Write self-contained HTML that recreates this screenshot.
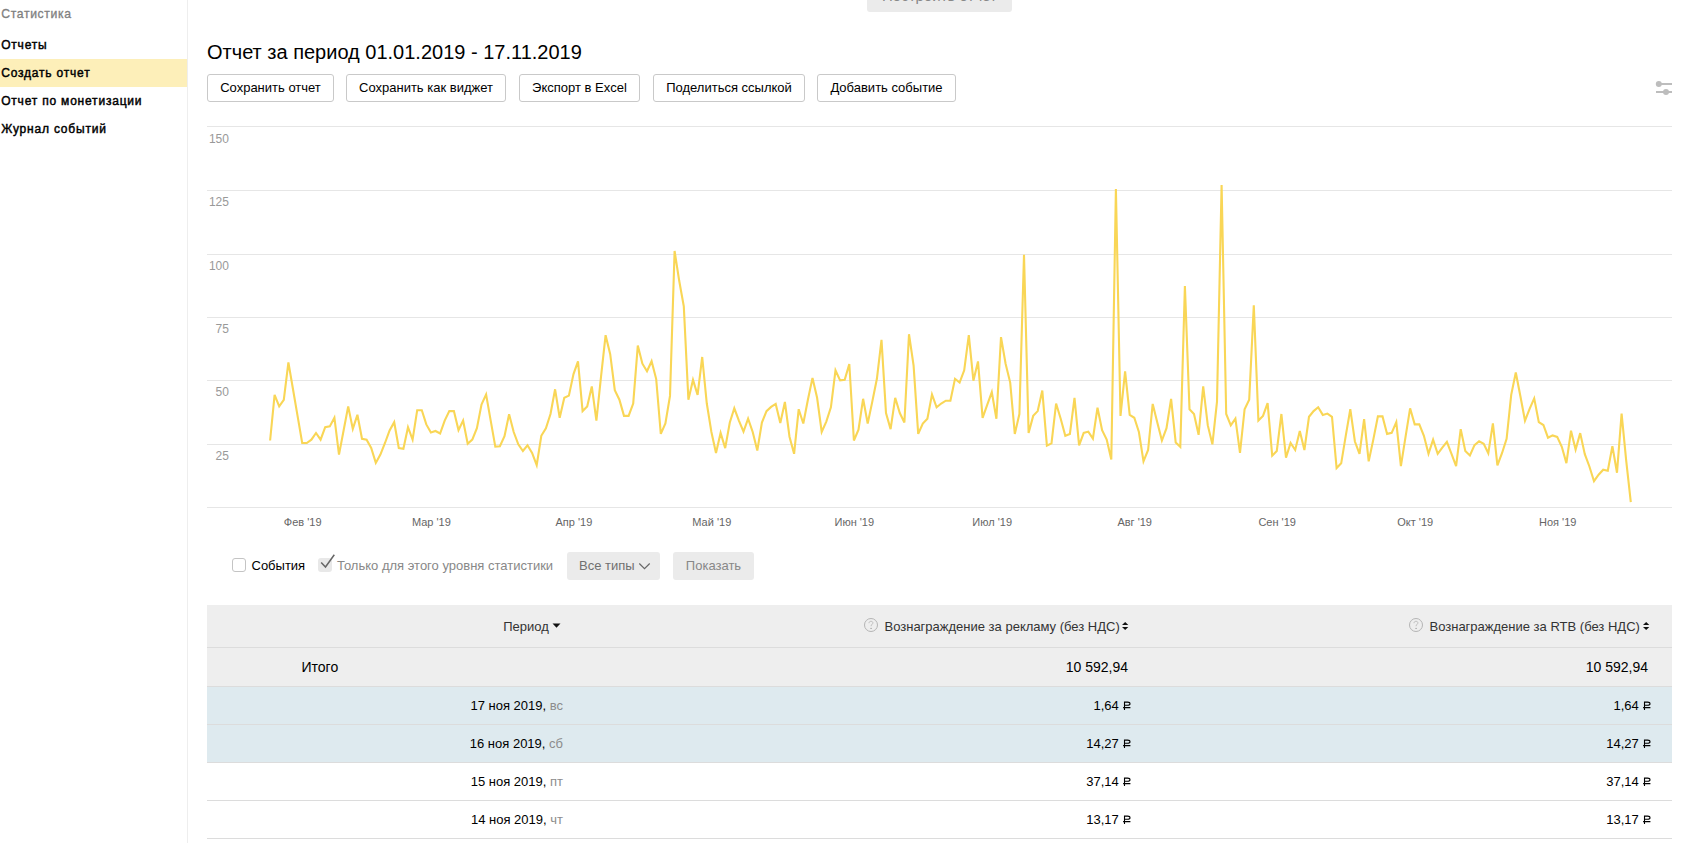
<!DOCTYPE html>
<html><head><meta charset="utf-8"><title>Статистика</title><style>
html,body{margin:0;padding:0}
body{width:1681px;height:843px;overflow:hidden;background:#fff;font-family:"Liberation Sans",sans-serif;position:relative;color:#000}
.a{position:absolute;white-space:nowrap;line-height:1}
.c{transform:translateX(-50%)}
.btn{position:absolute;box-sizing:border-box;height:28px;border:1px solid #c9c9c9;border-radius:3px;background:#fff}
.gbtn{position:absolute;box-sizing:border-box;background:#ebebeb;border-radius:3px}
.rub{position:relative;display:inline-block;width:8.67px;height:10px}
.rub svg{position:absolute;left:0;top:0}
</style></head><body>

<div style="position:absolute;left:187px;top:0;width:1px;height:843px;background:#eeeeee"></div>
<div style="position:absolute;left:0;top:59px;width:187px;height:28px;background:#fdefb9"></div>
<div class="a" style="left:1.2px;top:7.67px;font-size:12.2px;color:#808080;letter-spacing:0.65px;-webkit-text-stroke:0.3px #808080">Статистика</div>
<div class="a" style="left:1.2px;top:38.84px;font-size:12px;color:#000;letter-spacing:0.8px;-webkit-text-stroke:0.45px #000">Отчеты</div>
<div class="a" style="left:1.2px;top:66.84px;font-size:12px;color:#000;letter-spacing:0.8px;-webkit-text-stroke:0.45px #000">Создать отчет</div>
<div class="a" style="left:1.2px;top:94.84px;font-size:12px;color:#000;letter-spacing:0.8px;-webkit-text-stroke:0.45px #000">Отчет по монетизации</div>
<div class="a" style="left:1.2px;top:122.84px;font-size:12px;color:#000;letter-spacing:0.8px;-webkit-text-stroke:0.45px #000">Журнал событий</div>
<div class="gbtn" style="left:867px;top:-16px;width:145px;height:28px"></div>
<div class="a c" style="left:939.5px;top:-12.20px;font-size:15px;color:#888">Построить отчет</div>
<div class="a" style="left:207.0px;top:42.07px;font-size:20px;color:#000">Отчет за период 01.01.2019 - 17.11.2019</div>
<div class="btn" style="left:207px;top:74px;width:127px"></div>
<div class="a c" style="left:270.5px;top:81.00px;font-size:13px;color:#000">Сохранить отчет</div>
<div class="btn" style="left:346px;top:74px;width:160px"></div>
<div class="a c" style="left:426.0px;top:81.00px;font-size:13px;color:#000">Сохранить как виджет</div>
<div class="btn" style="left:519px;top:74px;width:121px"></div>
<div class="a c" style="left:579.5px;top:81.00px;font-size:13px;color:#000">Экспорт в Excel</div>
<div class="btn" style="left:653px;top:74px;width:152px"></div>
<div class="a c" style="left:729.0px;top:81.00px;font-size:13px;color:#000">Поделиться ссылкой</div>
<div class="btn" style="left:817px;top:74px;width:139px"></div>
<div class="a c" style="left:886.5px;top:81.00px;font-size:13px;color:#000">Добавить событие</div>
<svg style="position:absolute;left:1650px;top:76px" width="30" height="24" viewBox="1650 76 30 24">
<line x1="1656" y1="84" x2="1672" y2="84" stroke="#bdbdbd" stroke-width="2"/>
<line x1="1656" y1="92" x2="1672" y2="92" stroke="#bdbdbd" stroke-width="2"/>
<circle cx="1658.8" cy="84" r="3" fill="#bdbdbd"/>
<circle cx="1666" cy="92" r="3" fill="#bdbdbd"/>
</svg>
<svg style="position:absolute;left:0;top:0" width="1681" height="843">
<rect x="207" y="126" width="1465" height="1" fill="#e6e6e6"/>
<rect x="207" y="190" width="1465" height="1" fill="#e6e6e6"/>
<rect x="207" y="254" width="1465" height="1" fill="#e6e6e6"/>
<rect x="207" y="317" width="1465" height="1" fill="#e6e6e6"/>
<rect x="207" y="380" width="1465" height="1" fill="#e6e6e6"/>
<rect x="207" y="444" width="1465" height="1" fill="#e6e6e6"/>
<rect x="207" y="507" width="1465" height="1" fill="#e6e6e6"/>
<path d="M270.1 440.5 L274.6 394.8 L279.2 406.4 L283.8 399.8 L288.4 362.4 L293.0 389.3 L297.6 416.1 L302.2 443.0 L306.8 443.0 L311.4 439.7 L316.0 433.0 L320.6 439.7 L325.2 427.2 L329.8 426.4 L334.4 417.7 L339.0 454.6 L343.6 430.5 L348.2 406.4 L352.8 428.9 L357.4 414.8 L362.0 438.8 L366.6 439.7 L371.2 448.0 L375.8 462.9 L380.4 454.6 L385.0 443.0 L389.6 430.5 L394.2 422.2 L398.8 448.0 L403.4 448.8 L408.0 427.2 L412.6 439.7 L417.2 410.2 L421.8 410.2 L426.3 424.4 L430.9 432.4 L435.5 431.0 L440.1 433.5 L444.7 420.6 L449.3 411.1 L453.9 411.1 L458.5 430.1 L463.1 420.6 L467.7 443.8 L472.3 439.6 L476.9 428.2 L481.5 404.5 L486.1 394.4 L490.7 420.6 L495.3 446.6 L499.9 446.2 L504.5 436.2 L509.1 414.3 L513.7 432.0 L518.3 444.3 L522.9 451.0 L527.5 445.3 L532.1 452.9 L536.7 465.2 L541.3 435.8 L545.9 428.2 L550.5 414.0 L555.1 389.3 L559.7 417.8 L564.3 397.8 L568.9 395.6 L573.5 374.1 L578.0 361.4 L582.6 411.1 L587.2 406.4 L591.8 386.4 L596.4 420.6 L601.0 376.9 L605.6 335.2 L610.2 354.2 L614.8 390.2 L619.4 399.7 L624.0 415.9 L628.6 415.9 L633.2 403.5 L637.8 345.6 L642.4 363.7 L647.0 371.3 L651.6 361.2 L656.2 379.1 L660.8 433.9 L665.4 423.5 L670.0 395.9 L674.6 251.0 L679.2 280.8 L683.8 306.4 L688.4 399.7 L693.0 379.9 L697.6 394.9 L702.2 357.0 L706.8 403.5 L711.4 432.0 L716.0 452.9 L720.6 432.9 L725.2 448.1 L729.8 422.5 L734.3 408.3 L738.9 420.6 L743.5 431.6 L748.1 418.7 L752.7 432.0 L757.3 450.6 L761.9 422.5 L766.5 411.1 L771.1 406.9 L775.7 403.9 L780.3 423.1 L784.9 402.0 L789.5 436.7 L794.1 453.8 L798.7 409.2 L803.3 423.5 L807.9 399.7 L812.5 377.9 L817.1 397.8 L821.7 432.0 L826.3 421.6 L830.9 407.3 L835.5 370.3 L840.1 380.4 L844.7 379.8 L849.3 364.0 L853.9 440.5 L858.5 429.7 L863.1 398.8 L867.7 423.5 L872.3 401.6 L876.9 378.8 L881.5 339.9 L886.0 413.0 L890.6 429.1 L895.2 397.8 L899.8 413.0 L904.4 422.5 L909.0 334.2 L913.6 365.6 L918.2 433.9 L922.8 423.5 L927.4 418.7 L932.0 394.4 L936.6 407.3 L941.2 403.5 L945.8 400.7 L950.4 400.7 L955.0 378.8 L959.6 382.6 L964.2 370.3 L968.8 335.2 L973.4 380.7 L978.0 361.4 L982.6 417.8 L987.2 404.9 L991.8 392.1 L996.4 418.7 L1001.0 337.1 L1005.6 363.7 L1010.2 382.6 L1014.8 433.9 L1019.4 414.0 L1024.0 254.9 L1028.6 432.9 L1033.2 415.9 L1037.7 411.1 L1042.3 390.6 L1046.9 445.7 L1051.5 443.4 L1056.1 403.5 L1060.7 418.7 L1065.3 435.8 L1069.9 433.9 L1074.5 397.8 L1079.1 445.3 L1083.7 432.9 L1088.3 431.6 L1092.9 438.6 L1097.5 407.7 L1102.1 430.1 L1106.7 439.6 L1111.3 459.5 L1115.9 188.9 L1120.5 415.9 L1125.1 371.3 L1129.7 414.9 L1134.3 417.8 L1138.9 432.0 L1143.5 461.4 L1148.1 450.0 L1152.7 403.9 L1157.3 422.5 L1161.9 440.5 L1166.5 428.2 L1171.1 398.8 L1175.7 442.4 L1180.3 446.8 L1184.9 286.0 L1189.5 409.2 L1194.0 414.0 L1198.6 434.8 L1203.2 386.4 L1207.8 425.4 L1212.4 444.3 L1217.0 401.6 L1221.6 185.1 L1226.2 414.0 L1230.8 425.4 L1235.4 418.7 L1240.0 452.9 L1244.6 409.2 L1249.2 399.7 L1253.8 305.2 L1258.4 420.6 L1263.0 415.9 L1267.6 403.1 L1272.2 455.7 L1276.8 451.0 L1281.4 414.0 L1286.0 457.6 L1290.6 443.0 L1295.2 450.0 L1299.8 431.0 L1304.4 450.0 L1309.0 416.8 L1313.6 411.1 L1318.2 407.3 L1322.8 414.9 L1327.4 413.6 L1332.0 416.8 L1336.6 468.1 L1341.2 463.3 L1345.7 436.2 L1350.3 409.2 L1354.9 441.5 L1359.5 453.8 L1364.1 419.1 L1368.7 461.4 L1373.3 439.6 L1377.9 416.4 L1382.5 416.4 L1387.1 433.9 L1391.7 432.9 L1396.3 422.1 L1400.9 466.2 L1405.5 437.1 L1410.1 408.3 L1414.7 424.4 L1419.3 424.4 L1423.9 435.8 L1428.5 453.8 L1433.1 439.6 L1437.7 453.8 L1442.3 447.6 L1446.9 441.9 L1451.5 453.8 L1456.1 466.2 L1460.7 429.1 L1465.3 451.0 L1469.9 455.5 L1474.5 445.1 L1479.1 441.3 L1483.7 443.7 L1488.3 453.2 L1492.9 423.3 L1497.4 465.3 L1502.0 453.2 L1506.6 438.9 L1511.2 394.8 L1515.8 372.5 L1520.4 396.2 L1525.0 420.6 L1529.6 408.8 L1534.2 398.4 L1538.8 422.1 L1543.4 425.0 L1548.0 437.7 L1552.6 435.4 L1557.2 436.9 L1561.8 446.8 L1566.4 463.1 L1571.0 430.7 L1575.6 449.6 L1580.2 433.1 L1584.8 454.1 L1589.4 466.5 L1594.0 481.2 L1598.6 474.7 L1603.2 469.7 L1607.8 470.8 L1612.4 446.1 L1617.0 472.7 L1621.6 413.6 L1626.2 460.6 L1630.8 502.1" fill="none" stroke="#f9d656" stroke-width="2.1"/>
</svg>
<div class="a" style="right:1452.1px;top:132.64px;font-size:12px;color:#999">150</div>
<div class="a" style="right:1452.1px;top:195.84px;font-size:12px;color:#999">125</div>
<div class="a" style="right:1452.1px;top:259.84px;font-size:12px;color:#999">100</div>
<div class="a" style="right:1452.1px;top:322.84px;font-size:12px;color:#999">75</div>
<div class="a" style="right:1452.1px;top:385.84px;font-size:12px;color:#999">50</div>
<div class="a" style="right:1452.1px;top:449.84px;font-size:12px;color:#999">25</div>
<div class="a c" style="left:302.7px;top:516.69px;font-size:11px;color:#666">Фев '19</div>
<div class="a c" style="left:431.4px;top:516.69px;font-size:11px;color:#666">Мар '19</div>
<div class="a c" style="left:573.9px;top:516.69px;font-size:11px;color:#666">Апр '19</div>
<div class="a c" style="left:711.8px;top:516.69px;font-size:11px;color:#666">Май '19</div>
<div class="a c" style="left:854.3px;top:516.69px;font-size:11px;color:#666">Июн '19</div>
<div class="a c" style="left:992.2px;top:516.69px;font-size:11px;color:#666">Июл '19</div>
<div class="a c" style="left:1134.7px;top:516.69px;font-size:11px;color:#666">Авг '19</div>
<div class="a c" style="left:1277.2px;top:516.69px;font-size:11px;color:#666">Сен '19</div>
<div class="a c" style="left:1415.2px;top:516.69px;font-size:11px;color:#666">Окт '19</div>
<div class="a c" style="left:1557.7px;top:516.69px;font-size:11px;color:#666">Ноя '19</div>
<div style="position:absolute;left:232px;top:558px;width:14px;height:14px;box-sizing:border-box;border:1px solid #c4c4c4;border-radius:3px;background:#fff"></div>
<div class="a" style="left:251.5px;top:559.00px;font-size:13px;color:#000">События</div>
<div style="position:absolute;left:318px;top:558px;width:14px;height:14px;box-sizing:border-box;border-radius:3px;background:#e8e8e8"></div>
<svg style="position:absolute;left:316px;top:550px" width="24" height="24" viewBox="316 550 24 24"><path d="M321.2 562.4 L325.5 567 L334.3 554.8" fill="none" stroke="#666" stroke-width="1.5"/></svg>
<div class="a" style="left:337.0px;top:559.00px;font-size:13px;color:#888">Только для этого уровня статистики</div>
<div class="gbtn" style="left:567px;top:552px;width:93px;height:28px"></div>
<div class="a" style="left:579.0px;top:559.00px;font-size:13px;color:#707070">Все типы</div>
<svg style="position:absolute;left:636px;top:558px" width="18" height="16" viewBox="636 558 18 16"><path d="M639.3 563.5 L644.5 568.7 L649.7 563.5" fill="none" stroke="#666" stroke-width="1.15"/></svg>
<div class="gbtn" style="left:673px;top:552px;width:81px;height:28px"></div>
<div class="a c" style="left:713.5px;top:559.00px;font-size:13px;color:#888">Показать</div>
<div style="position:absolute;left:207px;top:605px;width:1465px;height:81px;background:#eeeeee"></div>
<div style="position:absolute;left:207px;top:686px;width:1465px;height:76px;background:#deeaef"></div>
<div style="position:absolute;left:207px;top:647px;width:1465px;height:1px;background:#dcdcdc"></div>
<div style="position:absolute;left:207px;top:686px;width:1465px;height:1px;background:#dcdcdc"></div>
<div style="position:absolute;left:207px;top:724px;width:1465px;height:1px;background:#dcdcdc"></div>
<div style="position:absolute;left:207px;top:762px;width:1465px;height:1px;background:#dcdcdc"></div>
<div style="position:absolute;left:207px;top:800px;width:1465px;height:1px;background:#dcdcdc"></div>
<div style="position:absolute;left:207px;top:838px;width:1465px;height:1px;background:#dcdcdc"></div>
<div class="a" style="left:503.2px;top:620.00px;font-size:13px;color:#333">Период</div>
<svg style="position:absolute;left:552px;top:622px" width="10" height="10" viewBox="0 0 10 10"><path d="M0.5 1.6 L8.5 1.6 L4.5 5.8 Z" fill="#111"/></svg>
<svg style="position:absolute;left:864px;top:618px" width="14" height="14" viewBox="0 0 14 14"><circle cx="7" cy="7" r="6.5" fill="none" stroke="#b4b4b4" stroke-width="1"/><path d="M5 5.2 C5 3.9 5.9 3.3 7 3.3 C8.2 3.3 8.9 4 8.9 4.9 C8.9 6.1 7.1 6.4 7.1 8.2" fill="none" stroke="#b8b8b8" stroke-width="0.9"/><path d="M6.3 10.4 H7.9" stroke="#a8a8a8" stroke-width="1"/></svg>
<div class="a" style="left:884.5px;top:620.00px;font-size:13px;color:#333">Вознаграждение за рекламу (без НДС)</div>
<svg style="position:absolute;left:1409px;top:618px" width="14" height="14" viewBox="0 0 14 14"><circle cx="7" cy="7" r="6.5" fill="none" stroke="#b4b4b4" stroke-width="1"/><path d="M5 5.2 C5 3.9 5.9 3.3 7 3.3 C8.2 3.3 8.9 4 8.9 4.9 C8.9 6.1 7.1 6.4 7.1 8.2" fill="none" stroke="#b8b8b8" stroke-width="0.9"/><path d="M6.3 10.4 H7.9" stroke="#a8a8a8" stroke-width="1"/></svg>
<div class="a" style="left:1429.5px;top:620.00px;font-size:13px;color:#333">Вознаграждение за RTB (без НДС)</div>
<svg style="position:absolute;left:1122px;top:621px" width="8" height="10" viewBox="0 0 8 10"><path d="M0 3.9 L3.15 0.9 L6.3 3.9 Z M0 6 L6.3 6 L3.15 9 Z" fill="#111"/></svg>
<svg style="position:absolute;left:1643px;top:621px" width="8" height="10" viewBox="0 0 8 10"><path d="M0 3.9 L3.15 0.9 L6.3 3.9 Z M0 6 L6.3 6 L3.15 9 Z" fill="#111"/></svg>
<div class="a" style="left:301.5px;top:660.15px;font-size:14px;color:#000">Итого</div>
<div class="a" style="right:553.0px;top:660.15px;font-size:14px;color:#000">10 592,94</div>
<div class="a" style="right:33.0px;top:660.15px;font-size:14px;color:#000">10 592,94</div>
<div class="a" style="right:1118.0px;top:699.00px;font-size:13px;color:#000">17 ноя 2019, <span style="color:#8c8c8c">вс</span></div>
<div class="a" style="right:550.0px;top:699.00px;font-size:13px;color:#000">1,64 <span class="rub"><svg width="10" height="11" viewBox="0 0 10 11"><path d="M2.5 1.6 V10 M2.5 2.1 H5.6 C7.4 2.1 8.0 2.9 8.0 3.7 C8.0 4.5 7.4 5.3 5.6 5.3 H2.5 M1.1 7.6 H8.4" fill="none" stroke="#000" stroke-width="1.1"/></svg></span></div>
<div class="a" style="right:30.0px;top:699.00px;font-size:13px;color:#000">1,64 <span class="rub"><svg width="10" height="11" viewBox="0 0 10 11"><path d="M2.5 1.6 V10 M2.5 2.1 H5.6 C7.4 2.1 8.0 2.9 8.0 3.7 C8.0 4.5 7.4 5.3 5.6 5.3 H2.5 M1.1 7.6 H8.4" fill="none" stroke="#000" stroke-width="1.1"/></svg></span></div>
<div class="a" style="right:1118.0px;top:737.00px;font-size:13px;color:#000">16 ноя 2019, <span style="color:#8c8c8c">сб</span></div>
<div class="a" style="right:550.0px;top:737.00px;font-size:13px;color:#000">14,27 <span class="rub"><svg width="10" height="11" viewBox="0 0 10 11"><path d="M2.5 1.6 V10 M2.5 2.1 H5.6 C7.4 2.1 8.0 2.9 8.0 3.7 C8.0 4.5 7.4 5.3 5.6 5.3 H2.5 M1.1 7.6 H8.4" fill="none" stroke="#000" stroke-width="1.1"/></svg></span></div>
<div class="a" style="right:30.0px;top:737.00px;font-size:13px;color:#000">14,27 <span class="rub"><svg width="10" height="11" viewBox="0 0 10 11"><path d="M2.5 1.6 V10 M2.5 2.1 H5.6 C7.4 2.1 8.0 2.9 8.0 3.7 C8.0 4.5 7.4 5.3 5.6 5.3 H2.5 M1.1 7.6 H8.4" fill="none" stroke="#000" stroke-width="1.1"/></svg></span></div>
<div class="a" style="right:1118.0px;top:775.00px;font-size:13px;color:#000">15 ноя 2019, <span style="color:#8c8c8c">пт</span></div>
<div class="a" style="right:550.0px;top:775.00px;font-size:13px;color:#000">37,14 <span class="rub"><svg width="10" height="11" viewBox="0 0 10 11"><path d="M2.5 1.6 V10 M2.5 2.1 H5.6 C7.4 2.1 8.0 2.9 8.0 3.7 C8.0 4.5 7.4 5.3 5.6 5.3 H2.5 M1.1 7.6 H8.4" fill="none" stroke="#000" stroke-width="1.1"/></svg></span></div>
<div class="a" style="right:30.0px;top:775.00px;font-size:13px;color:#000">37,14 <span class="rub"><svg width="10" height="11" viewBox="0 0 10 11"><path d="M2.5 1.6 V10 M2.5 2.1 H5.6 C7.4 2.1 8.0 2.9 8.0 3.7 C8.0 4.5 7.4 5.3 5.6 5.3 H2.5 M1.1 7.6 H8.4" fill="none" stroke="#000" stroke-width="1.1"/></svg></span></div>
<div class="a" style="right:1118.0px;top:813.00px;font-size:13px;color:#000">14 ноя 2019, <span style="color:#8c8c8c">чт</span></div>
<div class="a" style="right:550.0px;top:813.00px;font-size:13px;color:#000">13,17 <span class="rub"><svg width="10" height="11" viewBox="0 0 10 11"><path d="M2.5 1.6 V10 M2.5 2.1 H5.6 C7.4 2.1 8.0 2.9 8.0 3.7 C8.0 4.5 7.4 5.3 5.6 5.3 H2.5 M1.1 7.6 H8.4" fill="none" stroke="#000" stroke-width="1.1"/></svg></span></div>
<div class="a" style="right:30.0px;top:813.00px;font-size:13px;color:#000">13,17 <span class="rub"><svg width="10" height="11" viewBox="0 0 10 11"><path d="M2.5 1.6 V10 M2.5 2.1 H5.6 C7.4 2.1 8.0 2.9 8.0 3.7 C8.0 4.5 7.4 5.3 5.6 5.3 H2.5 M1.1 7.6 H8.4" fill="none" stroke="#000" stroke-width="1.1"/></svg></span></div>
</body></html>
